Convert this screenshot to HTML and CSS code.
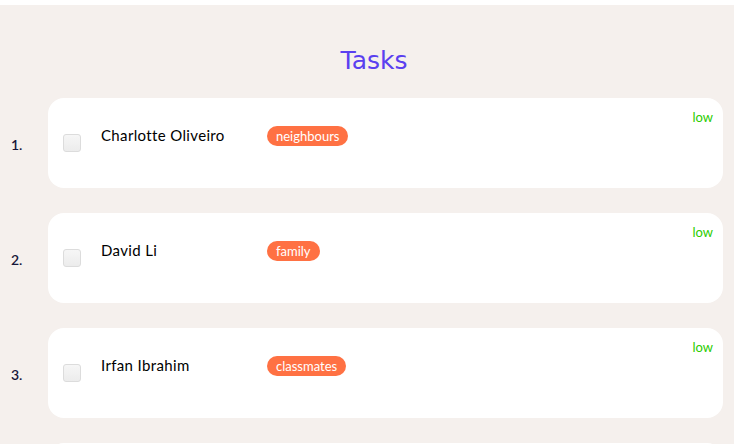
FILE: index.html
```html
<!DOCTYPE html>
<html lang="en">
<head>
<meta charset="utf-8">
<title>Tasks</title>
<link rel="stylesheet" href="styles.css">
</head>
<body>
<main class="board">
  <h1 class="title">Tasks</h1>
  <ol class="tasks">
    <li class="task">
      <span class="num">1.</span>
      <div class="card">
        <span class="check"></span>
        <div class="info">
          <span class="name">Charlotte Oliveiro</span>
          <span class="tag">neighbours</span>
        </div>
        <span class="prio">low</span>
      </div>
    </li>
    <li class="task">
      <span class="num">2.</span>
      <div class="card">
        <span class="check"></span>
        <div class="info">
          <span class="name">David Li</span>
          <span class="tag">family</span>
        </div>
        <span class="prio">low</span>
      </div>
    </li>
    <li class="task">
      <span class="num">3.</span>
      <div class="card">
        <span class="check"></span>
        <div class="info">
          <span class="name">Irfan Ibrahim</span>
          <span class="tag">classmates</span>
        </div>
        <span class="prio">low</span>
      </div>
    </li>
    <li class="task">
      <span class="num"></span>
      <div class="card"></div>
    </li>
  </ol>
</main>
</body>
</html>
```
FILE: styles.css
```css
html, body {
  margin: 0;
  padding: 0;
  background: #ffffff;
}
body {
  padding-top: 5px;
  font-family: Lato, "Open Sans", sans-serif;
}
.board {
  background: #f5f0ed;
  padding-top: 41px;
  min-height: 600px;
}
.title {
  margin: 0 0 22px;
  padding-left: 14px;
  text-align: center;
  font-family: "DejaVu Sans", Verdana, sans-serif;
  font-weight: normal;
  font-size: 25px;
  line-height: 30px;
  color: #5a40f0;
}
.tasks {
  list-style: none;
  margin: 0;
  padding: 0;
}
.task {
  display: flex;
  align-items: center;
  margin-bottom: 25px;
}
.num {
  width: 37px;
  padding-left: 11px;
  font-size: 14px;
  color: #16163a;
  font-weight: 600;
  padding-top: 2px;
}
.card {
  width: 675px;
  height: 90px;
  box-sizing: border-box;
  background: #ffffff;
  border-radius: 16px;
  display: flex;
  padding: 0 10px 0 15px;
}
.check {
  align-self: center;
  width: 18px;
  height: 18px;
  box-sizing: border-box;
  border: 1px solid #dcdcdc;
  border-radius: 3px;
  background: linear-gradient(#f6f6f6, #ececec);
}
.info {
  display: flex;
  align-items: center;
  margin-left: 20px;
  height: 20px;
  margin-top: 27px;
}
.name {
  width: 166px;
  font-size: 15px;
  letter-spacing: 0.35px;
  color: #000;
  line-height: 18px;
  margin-top: -1px;
}
.tag {
  background: #ff7143;
  color: #fff;
  font-size: 13px;
  line-height: 20px;
  height: 20px;
  padding: 0 9px;
  border-radius: 10px;
  margin-top: 2px;
}
.prio {
  margin-left: auto;
  margin-top: 11px;
  font-size: 13px;
  line-height: 16px;
  color: #2ccc00;
}
```
